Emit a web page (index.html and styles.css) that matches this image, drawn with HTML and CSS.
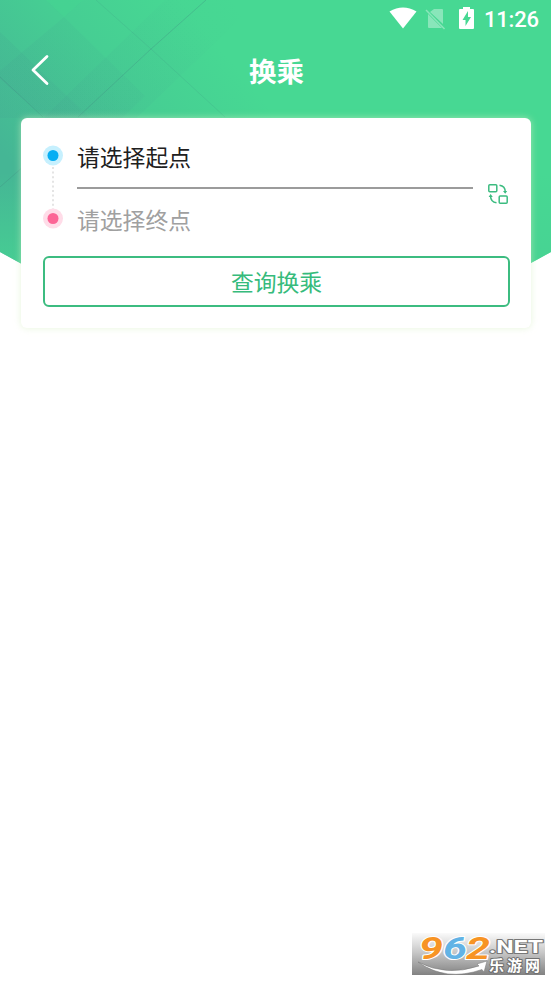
FILE: index.html
```html
<!DOCTYPE html>
<html lang="zh-CN">
<head>
<meta charset="utf-8">
<title>换乘</title>
<link rel="stylesheet" href="styles.css">
</head>
<body>
<div class="screen">
  <svg class="backdrop" viewBox="0 0 551 320" aria-hidden="true">
    <defs>
      <linearGradient id="tint" gradientUnits="userSpaceOnUse" x1="0" y1="150" x2="180" y2="0">
        <stop offset="0" stop-color="#45b695"/><stop offset=".55" stop-color="#46cd93"/><stop offset="1" stop-color="#47d893"/>
      </linearGradient>
      <linearGradient id="low" x1="0" y1="0" x2="0" y2="1">
        <stop offset=".54" stop-color="#47d293" stop-opacity="0"/><stop offset=".82" stop-color="#47d293" stop-opacity=".8"/>
      </linearGradient>
      <linearGradient id="fade" gradientUnits="userSpaceOnUse" x1="50" y1="110" x2="235" y2="0">
        <stop offset="0" stop-color="#439e90" stop-opacity=".14"/><stop offset="1" stop-color="#439e90" stop-opacity="0"/>
      </linearGradient>
      <clipPath id="shape"><path d="M0 0H551V252L520 269Q430 315 276 315Q121 315 31 269L0 252Z"/></clipPath>
    </defs>
    <g clip-path="url(#shape)">
      <path fill="url(#tint)" d="M0 0H551V320H0Z"/>
      <path fill="url(#low)" d="M0 0H551V320H0Z"/>
      <path fill="url(#fade)" d="M165 0H260L124 130H31Z"/>
      <path fill="url(#fade)" d="M64 17L145 96L110 130H60L-5 75Z"/>
      <path fill="url(#fade)" d="M0 32L90 118H0Z"/>
      <path fill="#46dc92" opacity=".3" d="M46 0H83L64 17Z"/>
      <path fill="none" stroke="#438e83" stroke-opacity=".35" d="M206 0L151 49L78 117M0 77L43 117M0 187L24 166"/>
      <path fill="none" stroke="#438e83" stroke-opacity=".18" d="M96 0L151 49L225 117"/>
    </g>
  </svg>

  <div class="statusbar">
    <svg class="wifi" viewBox="0 0 28 22"><path d="M.5 4.5Q14-3.5 27.500 4.500L14 21.500Z"/></svg>
    <svg class="sim" viewBox="0 0 21 22"><path d="M9 1H17Q18 1 18 2V16L5 4ZM3 6L17 20H4Q3 20 3 19Z"/><path class="slash" d="M1 2L19.500 21"/></svg>
    <svg class="battery" viewBox="0 0 15 22"><path fill-rule="evenodd" d="M4 0H11V2H14Q15 2 15 3V21Q15 22 14 22H1Q0 22 0 21V3Q0 2 1 2H4ZM9 4L3.500 13H6.500V19L12 10H9Z"/></svg>
    <span class="clock">11:26</span>
  </div>

  <header class="titlebar">
    <svg class="back" viewBox="0 0 20 32"><path d="M17 2.500L3 16L17 29.500"/></svg>
    <h1>换乘</h1>
  </header>

  <main class="card">
    <div class="route">
      <svg class="stops" viewBox="0 0 20 84">
        <path class="dots" d="M10 22V64"/>
        <circle cx="10" cy="10.500" r="10" fill="#c6f0fe"/><circle cx="10" cy="10.500" r="5.500" fill="#06aef3"/>
        <circle cx="10" cy="73.500" r="10" fill="#ffdce8"/><circle cx="10" cy="73.500" r="5.500" fill="#fc6596"/>
      </svg>
      <div class="fields">
        <div class="field start">请选择起点</div>
        <div class="field end">请选择终点</div>
      </div>
      <svg class="swap" viewBox="0 0 20 20">
        <rect x=".8" y=".8" width="8" height="7" rx="1"/><rect x="11.200" y="12" width="8" height="7.200" rx="1"/>
        <path d="M11.500 1.200Q17.300 2 17.300 8M8.500 18.800Q2.700 18 2.500 12"/><path class="tip" d="M15 7H19.200L17.200 9.800ZM.6 13H4.800L2.600 10Z"/>
      </svg>
    </div>
    <div class="query">查询换乘</div>
  </main>

  <div class="watermark">
    <svg viewBox="0 0 133 42">
      <g class="digits"><text x="7" y="25.500" textLength="24" lengthAdjust="spacingAndGlyphs" fill="#f79424">9</text><text x="31" y="25.500" textLength="24" lengthAdjust="spacingAndGlyphs" fill="#62b3e5">6</text><text x="54" y="25.500" textLength="24" lengthAdjust="spacingAndGlyphs" fill="#f79424">2</text></g>
      <text class="net" x="77" y="19.500" textLength="54" lengthAdjust="spacingAndGlyphs">.NET</text>
      <path class="swoosh" d="M6 29Q34 44 67 33L65 31L75 28L72 39L70 36.500Q34 49 6 29Z"/>
      <text class="site" x="77" y="38" textLength="51">乐游网</text>
    </svg>
  </div>
</div>
</body>
</html>
```
FILE: styles.css
```css
* { box-sizing: border-box; }
body {
  margin: 0;
  background: #fff;
  font-family: Roboto, "Noto Sans CJK SC", sans-serif;
}
.screen {
  position: relative;
  display: flex;
  flex-direction: column;
  height: 981px;
  overflow: hidden;
}
.backdrop {
  position: absolute;
  z-index: -1;
  top: 0;
  left: 0;
  width: 551px;
  height: 320px;
}
.statusbar {
  display: flex;
  justify-content: flex-end;
  align-items: center;
  height: 38px;
  padding-right: 12px;
  color: #fff;
  fill: #fff;
}
.wifi { width: 28px; height: 22px; margin: 0 8px 2px 0; }
.sim { width: 21px; height: 22px; margin-right: 13px; opacity: .36; }
.slash { stroke: #fff; stroke-width: 1.5; }
.battery { width: 15px; height: 22px; margin: 0 10px 2px 0; }
.clock { width: 55px; font-size: 22px; font-weight: 500; letter-spacing: -.2px; line-height: 38px; padding-top: 1px; white-space: nowrap; }
.titlebar {
  display: grid;
  grid-template-columns: 60px 1fr 60px;
  align-items: center;
  height: 66px;
  color: #fff;
}
.back {
  width: 20px;
  height: 32px;
  margin: 0 0 2px 30px;
  fill: none;
  stroke: #fff;
  stroke-width: 2.8;
  stroke-linecap: round;
  stroke-linejoin: round;
}
h1 {
  margin: 4px 0 0 2px;
  font-size: 27.500px;
  line-height: 40px;
  font-weight: 700;
  text-align: center;
}
.card {
  height: 210px;
  margin: 14px 20px 0 21px;
  padding: 27px 21px 21px 22px;
  border-radius: 6px;
  background: #fff;
  box-shadow: 0 0 7px rgba(215, 240, 195, .6);
}
.route { display: flex; height: 111px; }
.stops { width: 20px; height: 84px; margin-right: 14px; }
.dots { stroke: #e4e4e4; stroke-width: 2; stroke-dasharray: 2 2.600; }
.fields { width: 396px; margin-right: 15px; }
.field { font-size: 22.800px; line-height: 34px; }
.start {
  height: 47px;
  margin: -3px 0 16px;
  border-bottom: 2px solid #9b9b9b;
  color: #202020;
}
.end { color: #a0a0a0; }
.swap {
  width: 20px;
  height: 20px;
  margin-top: 39px;
  fill: none;
  stroke: #3cbc80;
  stroke-width: 1.5;
}
.tip { fill: #3cbc80; stroke: none; }
.query {
  height: 51px;
  border: 2px solid #3cbc80;
  border-radius: 6px;
  color: #36bb7c;
  font-size: 22.800px;
  line-height: 52px;
  text-align: center;
}
.watermark {
  width: 133px;
  height: 42px;
  margin: auto 0 6px 412px;
  background: linear-gradient(#fafafa, #c9c9c9 45%, #828282);
}
.watermark svg { display: block; width: 133px; height: 42px; }
.watermark text { paint-order: stroke; stroke-linejoin: round; }
.digits {
  font: italic 700 31px Roboto, sans-serif;
  stroke: #fff;
  stroke-width: 2;
}
.net {
  font: 700 18px Roboto, sans-serif;
  fill: #fff;
  stroke: #777;
  stroke-width: 2;
}
.site {
  font: 700 15px "Noto Sans CJK SC", sans-serif;
  fill: #fff;
  stroke: #707070;
  stroke-width: 2;
}
.swoosh { fill: #fff; stroke: #777; stroke-width: .5; }
```
